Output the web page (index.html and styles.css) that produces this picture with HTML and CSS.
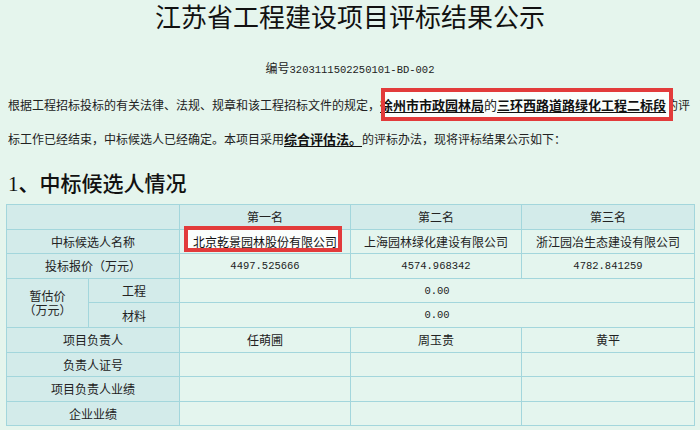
FILE: index.html
```html
<!DOCTYPE html>
<html lang="zh-CN">
<head>
<meta charset="utf-8">
<title>江苏省工程建设项目评标结果公示</title>
<link rel="stylesheet" href="styles.css">
</head>
<body>
<div class="page">
  <h1 class="title">江苏省工程建设项目评标结果公示</h1>
  <div class="code">编号<span class="mono">3203111502250101-BD-002</span></div>
  <p class="intro">根据工程招标投标的有关法律、法规、规章和该工程招标文件的规定，<span class="hl"><b class="u">徐州市市政园林局</b>的<b class="u">三环西路道路绿化工程二标段</b></span>的评标工作已经结束，中标候选人已经确定。本项目采用<b class="u">综合评估法。</b>的评标办法，现将评标结果公示如下：</p>
  <h2 class="sec">1、中标候选人情况</h2>
  <table class="result">
    <colgroup>
      <col class="c-a"><col class="c-b"><col class="c-d"><col class="c-d"><col>
    </colgroup>
    <tr class="head"><td class="lab" colspan="2"></td><td>第一名</td><td>第二名</td><td>第三名</td></tr>
    <tr><td class="lab" colspan="2">中标候选人名称</td><td class="boxed"><span class="boxed-text">北京乾景园林股份有限公司</span></td><td>上海园林绿化建设有限公司</td><td>浙江园冶生态建设有限公司</td></tr>
    <tr><td class="lab" colspan="2">投标报价（万元）</td><td class="mono">4497.525666</td><td class="mono">4574.968342</td><td class="mono">4782.841259</td></tr>
    <tr><td class="lab est" rowspan="2">暂估价<br>（万元）</td><td class="lab">工程</td><td class="mono" colspan="3">0.00</td></tr>
    <tr><td class="lab">材料</td><td class="mono" colspan="3">0.00</td></tr>
    <tr><td class="lab" colspan="2">项目负责人</td><td>任萌圃</td><td>周玉贵</td><td>黄平</td></tr>
    <tr><td class="lab" colspan="2">负责人证号</td><td></td><td></td><td></td></tr>
    <tr><td class="lab" colspan="2">项目负责人业绩</td><td></td><td></td><td></td></tr>
    <tr><td class="lab" colspan="2">企业业绩</td><td></td><td></td><td></td></tr>
  </table>
</div>
</body>
</html>
```

FILE: styles.css
```css
html, body {
  margin: 0;
  padding: 0;
}
body {
  background: #e5f5ed;
  font-family: "Noto Sans CJK SC", "Noto Sans", sans-serif;
  font-size: 12px;
  color: #222;
}
.page {
  padding: 0 6px;
}
.title {
  margin: 0;
  font-family: "Liberation Serif", "Noto Sans CJK SC", serif;
  font-size: 26px;
  line-height: 38px;
  font-weight: normal;
  text-align: center;
  color: #111;
}
.code {
  margin-top: 20px;
  line-height: 20px;
  text-align: center;
}
.mono {
  font-family: "Liberation Mono", monospace;
  font-size: 10.5px;
}
.intro {
  margin: 8px 0 0;
  padding: 0 2px;
  line-height: 34px;
}
.hl {
  position: relative;
  z-index: 0;
  font-size: 13px;
}
.hl::before,
.hl::after {
  content: "";
  position: absolute;
  left: 1px;
  right: -7px;
  top: -7px;
  bottom: -7px;
}
.hl::before {
  z-index: -1;
  background: #fbfefc;
}
.hl::after {
  border: 4px solid #e23b3b;
}
.u {
  font-size: 13px;
  font-weight: bold;
  color: #111;
  text-decoration: underline;
  text-underline-offset: 2px;
}
.sec {
  margin: 14px 0 0;
  padding: 0 2px;
  font-family: "Liberation Serif", "Noto Sans CJK SC", serif;
  font-size: 21px;
  line-height: 28px;
  font-weight: 500;
  color: #111;
}
.result {
  margin-top: 6px;
  width: 689px;
  border-collapse: collapse;
  table-layout: fixed;
}
.c-a { width: 82px; }
.c-b { width: 91px; }
.c-d { width: 171px; }
.result tr {
  height: 24.6px;
}
.result td {
  border: 1px solid #a3d6dc;
  background: #e4f5ee;
  color: #222;
  text-align: center;
  vertical-align: middle;
  padding: 0;
  white-space: nowrap;
}
.result .head td,
.result td.lab {
  background: #d3ebea;
}
.result td.est {
  line-height: 14px;
}
.result td.boxed {
  position: relative;
}
.result td.boxed::before {
  content: "";
  position: absolute;
  left: 4px;
  right: 8px;
  top: -4px;
  bottom: 1px;
  background: #fbfefc;
  border: 4px solid #e23b3b;
}
.boxed-text {
  position: relative;
  color: #111;
}
```
